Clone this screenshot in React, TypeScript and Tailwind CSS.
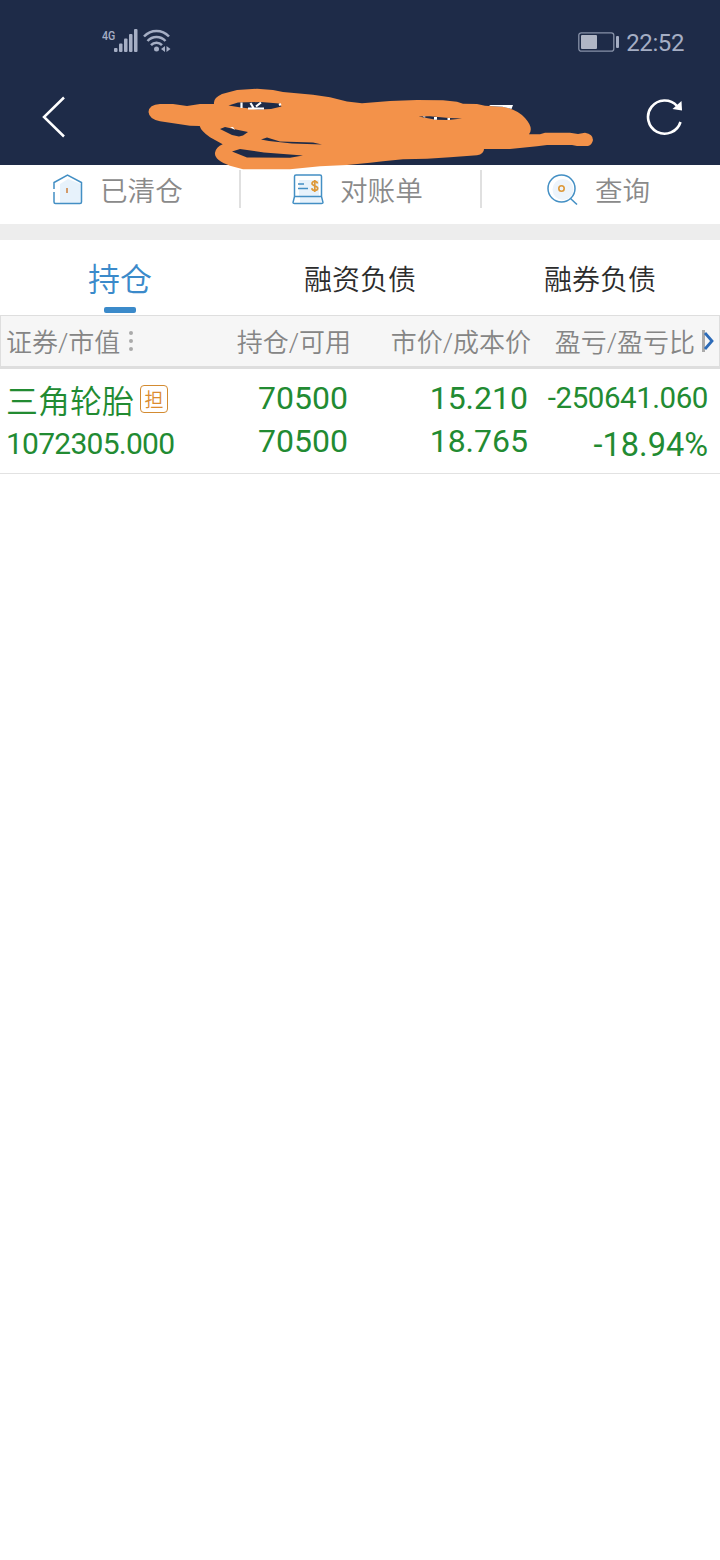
import React from "react";

type Holding = {
  name: string;
  tag: string;
  marketValue: string;
  quantity: string;
  available: string;
  price: string;
  cost: string;
  profit: string;
  profitRatio: string;
};

const holdings: Holding[] = [
  {
    name: "三角轮胎",
    tag: "担",
    marketValue: "1072305.000",
    quantity: "70500",
    available: "70500",
    price: "15.210",
    cost: "18.765",
    profit: "-250641.060",
    profitRatio: "-18.94%",
  },
];

const SignalIcon = () => (
  <svg width="24" height="23" viewBox="0 0 24 23" fill="#a5aec4">
    <rect x="0" y="19" width="3.5" height="4" rx="1" />
    <rect x="5" y="14.5" width="3.5" height="8.5" rx="1" />
    <rect x="10" y="9.5" width="3.5" height="13.5" rx="1" />
    <rect x="15" y="5" width="3.5" height="18" rx="1" />
    <rect x="20" y="0" width="3.5" height="23" rx="1" />
  </svg>
);

const WifiIcon = () => (
  <svg width="28" height="24" viewBox="0 0 28 24" fill="none" stroke="#a5aec4" strokeWidth="2.5">
    <path d="M1 7.5C8 .1 19 .1 26 7.5M4.5 12C9.5 6.8 17.5 6.8 22.5 12M8 16.2C11 12.9 16 12.9 19 16.2" />
    <circle cx="13.5" cy="20" r="2.5" fill="#a5aec4" stroke="none" />
    <path d="M22 17v6l-4-3zM23.5 17v6l4-3z" fill="#a5aec4" stroke="none" />
  </svg>
);

const BatteryIcon = () => (
  <svg width="41" height="20" viewBox="0 0 41 20">
    <rect x=".8" y=".8" width="35" height="18.4" rx="2.5" fill="none" stroke="#8791a8" strokeWidth="1.3" />
    <rect x="3" y="3" width="16" height="14" rx="1" fill="#b0b6c6" />
    <rect x="38" y="4" width="3" height="12" rx="1" fill="#a5aec4" />
  </svg>
);

const HouseIcon = () => (
  <svg width="30" height="31" viewBox="0 0 30 31" fill="none">
    <path d="M7 10 15 5l13 5v19H7z" fill="#e7f2fb" />
    <path d="M1 15V8.5L14.5 1 28.5 8.5V28q0 1.5-1.5 1.5H2.5Q1 29.5 1 28V18" stroke="#438fc4" strokeWidth="1.5" />
    <path d="M14 14v5" stroke="#d39a68" strokeWidth="2" />
  </svg>
);

const StatementIcon = () => (
  <svg width="32" height="31" viewBox="0 0 32 31" fill="none">
    <path d="M7 6h20v16H7zM8 23h20l2 6H8z" fill="#e7f2fb" />
    <path d="M2.5 22.5V2.5Q2.5 1 4 1h24q1.500 0 1.500 1.500v20M2.500 22.500h27l1.500 6q0 1-1.500 1H2.500Q1 29.500 1 28.500z" stroke="#438fc4" strokeWidth="1.5" />
    <path d="M6 10h6M6 14.500h10" stroke="#438fc4" strokeWidth="1.5" />
    <path d="M25.500 9.500C25 6.800 20 6.600 20 9.600s5.700 1.700 5.700 4.600-5.200 3-6 0M22.800 6v12" stroke="#dd9838" strokeWidth="1.7" />
  </svg>
);

const SearchIcon = () => (
  <svg width="31" height="31" viewBox="0 0 31 31" fill="none">
    <circle cx="16" cy="15.5" r="10.5" fill="#edf4fb" />
    <circle cx="14.5" cy="14.5" r="13.5" stroke="#438fc4" strokeWidth="1.5" />
    <path d="m23.500 24.500 6.500 6" stroke="#438fc4" strokeWidth="1.5" />
    <circle cx="14.5" cy="14.5" r="2.7" stroke="#dd9838" strokeWidth="1.6" />
  </svg>
);

// hand-drawn marker stroke that hides the account title
const Scribble = () => (
  <svg className="absolute left-[140px] top-[80px]" width="460" height="95" viewBox="140 80 460 95">
    <path
      fill="#f3924a"
      d="M148.500 112Q149 104.500 160 104L173 104 187 106 200 104 214 104Q213 98 222 94L237 90 257 88.700 273 90 283 92 313 94.700 330 97.300 347 101.500 362 103.300 390 101 417 100 443 100.300 457 101.700 463 103.700 477 104 485 105.700 502 106.700Q517 109 525 118 534 128 529 134.300L540 134.300 545 132.700 570 132.700 578 134 585 132.700Q593 134 593 140 592 145 588 146L577 146 572 145 547 145 537 146.300 510 149 484 149Q484 154 477 155.300L450 157.300 427 158.700 403 159.300 383 161.300 370 162.700 347 165 320 166.300 290 169.300 243 169.300 230 165.700Q214 160 215 152.700 216 147 222.700 144.300L210 137.300Q201 131 199.700 126L190 125.700 160 121.300Q149 119 148.500 112Z"
    />
    <g fill="#1e2b48">
      <path d="M228.500 105.500 238 102.500 261 102 279 103.500 281.500 106.500 271 109 258 109.500 241 107.500Z" />
      <path d="M220 129 225 127 236 129.500 248 132 243 135.500 239 136.500 232 135Z" />
      <path d="M261 139.500 267 137.500 280 141.500 313 142.500 322 144.500 292 143.500 269 141Z" />
      <path d="M232 151.500 240 149 264 152.500 303 155.500 290 157.700 247 157.500Z" />
      <path d="M418.500 116.500 430 116.300 449 118 462 118.500 448 120 436 119.700Z" />
    </g>
    <path
      d="M241.500 102.500v5.500M250.500 103l3 5M261 102.500l-5 4M248 108.500h16M279 105l2-1"
      stroke="#fff"
      strokeWidth="2.2"
      fill="none"
    />
    <path d="m230 127 5 3-2-3zM423 116l3 1-2 .5zM434 117h3v2.800h-3zM447.500 118h2.500v2h-2.500zM489 105h24l-1.500 4-9-2.300-12-.7z" fill="#fff" />
  </svg>
);

const actions = [
  { label: "已清仓", Icon: HouseIcon, className: "pl-[53px] gap-[17px]" },
  { label: "对账单", Icon: StatementIcon, className: "pl-[52px] gap-[16px]" },
  { label: "查询", Icon: SearchIcon, className: "pl-[67px] gap-[17px]" },
];

const tabs = ["持仓", "融资负债", "融券负债"];

const Header = () => (
  <header className="relative z-10 h-[165px] bg-[#1e2b48]">
    <div className="flex h-[80px] items-start justify-between pl-[102px] pr-[36px] pt-[29px] text-[#a5aec4]">
      <div className="flex">
        <span className="w-[12px] origin-left scale-x-[0.82] text-[13px] font-medium leading-[14px]">4G</span>
        <SignalIcon />
        <div className="ml-[5px]">
          <WifiIcon />
        </div>
      </div>
      <div className="flex items-center gap-[7px]">
        <div className="-mt-[3px]">
          <BatteryIcon />
        </div>
        <span className="text-[24px] leading-[29px] tracking-[-0.4px]">22:52</span>
      </div>
    </div>
    <div className="flex h-[75px] items-center justify-between pb-[2px] pl-[42px] pr-[36px]">
      <svg width="24" height="42" viewBox="0 0 24 42" fill="none" stroke="#fff" strokeWidth="2.5">
        <path d="M22 1.500 2 21l20 19.500" />
      </svg>
      <svg width="38" height="38" viewBox="0 0 38 38" fill="none">
        <path d="M34.500 24A16.600 16.600 0 1 1 31 8" stroke="#fff" strokeWidth="2.6" />
        <path d="m35.500 3 .5 9.500-9.500-1.500z" fill="#fff" />
      </svg>
    </div>
    <Scribble />
  </header>
);

const HoldingRow = ({ item }: { item: Holding }) => (
  <div className="grid h-[105px] grid-cols-[200px_148px_180px_180px] border-b border-[#e2e2e2] text-[32px] text-[#228b32]">
    <div className="pl-[6px] pt-[10px]">
      <div className="flex h-[43px] items-center">
        <span className="pt-[3px] text-[32px] font-[350]">{item.name}</span>
        <span className="ml-[6px] flex h-[28px] w-[28px] -translate-y-[2px] items-center justify-center rounded-[4px] border border-[#d38b31] text-[19px] leading-none text-[#dc8c2d]">
          <span className="pt-[3px] font-[350]">{item.tag}</span>
        </span>
      </div>
      <div className="text-[30px] leading-[43px] tracking-[-0.75px]">{item.marketValue}</div>
    </div>
    <div className="pt-[8px] text-right leading-[43px]">
      <div>{item.quantity}</div>
      <div>{item.available}</div>
    </div>
    <div className="pt-[8px] text-right leading-[43px]">
      <div>{item.price}</div>
      <div>{item.cost}</div>
    </div>
    <div className="whitespace-nowrap pt-[8px] text-right">
      <div className="text-[29.5px] leading-[43px] tracking-[-0.45px]">{item.profit}</div>
      <div className="pt-[3px] text-[32.5px] leading-[45px]">{item.profitRatio}</div>
    </div>
  </div>
);

export default function App() {
  return (
    <div className="min-h-[1560px] w-[720px] bg-white font-['Roboto','Noto_Sans_CJK_SC',sans-serif]">
      <Header />

      <nav className="grid h-[59px] grid-cols-3">
        {actions.map(({ label, Icon, className }, idx) => (
          <div key={label} className="relative">
            <div className={`flex h-[49px] items-center ${className}`}>
              <Icon />
              <span className="pt-[4px] text-[27.6px] font-[350] leading-[48px] text-[#8a8a8a]">{label}</span>
            </div>
            {idx < 2 && (
              <span
                className={`absolute top-[5px] h-[38px] w-[2px] bg-[#e0e0e0] ${idx === 0 ? "-right-px" : "-right-[2px]"}`}
              />
            )}
          </div>
        ))}
      </nav>
      <div className="h-[16px] bg-[#ededed]" />

      <div className="grid h-[75px] grid-cols-3 text-center">
        {tabs.map((tab, idx) =>
          idx === 0 ? (
            <div key={tab} className="flex flex-col items-center text-[#3b8aca]">
              <span className="h-[67px] text-[32px] font-[350] leading-[81px]">{tab}</span>
              <span className="h-[6px] w-[32px] rounded-[2px] bg-[#3b8aca]" />
            </div>
          ) : (
            <div key={tab} className="text-[28px] font-[350] leading-[82px] text-[#2c2c2c]">
              {tab}
            </div>
          )
        )}
      </div>

      <div className="grid h-[54px] grid-cols-[200px_150px_180px_164px_1fr] border border-b-[3px] border-[#dedede] bg-[#f6f6f6] text-right text-[26px] font-[350] leading-[54px] text-[#858585]">
        <div className="flex h-[50px] items-center pl-[5px]">
          <span className="pt-[4px]">证券/市值</span>
          <span className="ml-[9px] flex flex-col gap-[4px]">
            <i className="h-[4px] w-[4px] rounded-full bg-[#aaa]" />
            <i className="h-[4px] w-[4px] rounded-full bg-[#aaa]" />
            <i className="h-[4px] w-[4px] rounded-full bg-[#aaa]" />
          </span>
        </div>
        <div>持仓/可用</div>
        <div>市价/成本价</div>
        <div>盈亏/盈亏比</div>
        <div className="flex h-[50px] items-center pl-[7px]">
          <svg width="14" height="24" viewBox="0 0 14 24" fill="none">
            <path d="M1.500 1v22" stroke="#aaa" strokeWidth="3" />
            <path d="m3 4 7 8-7 8" stroke="#2c6bb8" strokeWidth="2.8" />
          </svg>
        </div>
      </div>

      {holdings.map((item) => (
        <HoldingRow key={item.name} item={item} />
      ))}
    </div>
  );
}
